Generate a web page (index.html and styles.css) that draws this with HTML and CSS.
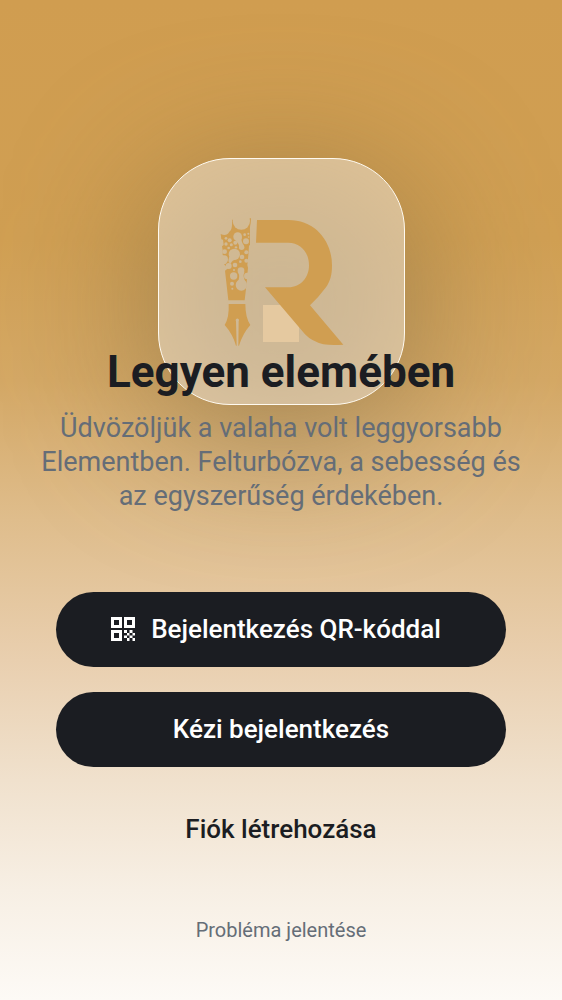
FILE: index.html
```html
<!DOCTYPE html>
<html lang="hu">
<head>
<meta charset="utf-8">
<meta name="viewport" content="width=device-width, initial-scale=1">
<title>Legyen elemében</title>
<link rel="stylesheet" href="styles.css">
</head>
<body>
<main class="welcome">
  <header class="hero">
    <div class="logo">
      <div class="logo-plate">
      <svg class="logo-mark" viewBox="3 6 480 450" aria-hidden="true">
        <defs>
          <mask id="bubbles" maskUnits="userSpaceOnUse" x="40" y="20" width="130" height="280">
            <rect x="40" y="20" width="130" height="280" fill="#fff"/>
            <g fill="#000">
              <circle cx="124" cy="48" r="26"/>
              <circle cx="113" cy="95" r="13"/><path d="M113 100L126 96Q121 108 132 122L118 131Q119 116 107 107Z"/><circle cx="125" cy="127" r="8"/>
              <circle cx="138" cy="109" r="9"/><circle cx="134" cy="89" r="4"/><circle cx="145" cy="86" r="3"/><circle cx="146" cy="96" r="2.500"/>
              <circle cx="89" cy="106" r="6"/><circle cx="78" cy="100" r="4"/><circle cx="106" cy="113" r="6"/><circle cx="94" cy="119" r="4.500"/>
              <circle cx="78" cy="117" r="5"/><circle cx="86" cy="129" r="4"/><circle cx="108" cy="127" r="3.500"/><circle cx="74" cy="140" r="7"/>
              <circle cx="103" cy="148" r="17"/><path d="M88 155Q84 165 86 172L92 176Q96 165 110 163Z"/><circle cx="72" cy="163" r="12"/><circle cx="86" cy="183" r="9"/>
              <circle cx="139" cy="142" r="6"/><circle cx="126" cy="156" r="7"/><circle cx="139" cy="167" r="6"/><circle cx="121" cy="170" r="4"/>
              <circle cx="105" cy="180" r="7"/><circle cx="102" cy="195" r="3"/><circle cx="101" cy="213" r="11"/><circle cx="96" cy="236" r="6"/><circle cx="97" cy="251" r="3"/>
              <circle cx="123" cy="197" r="10"/><path d="M114 201H133Q127 216 138 232L112 234Q122 216 114 201Z"/><circle cx="124" cy="240" r="17"/>
              <circle cx="142" cy="213" r="10"/>
            </g>
          </mask>
        </defs>
        <rect class="mark-tile" x="189" y="300" width="108" height="111"/>
        <path class="mark-gold" d="M171 45H265C345 45 396 107 396 181C396 210 391 228 378 247Q355 278 330 301L430 419Q397 422 370 418Q335 409 315 388L195 247H265C303 247 327 217 327 181C327 143 303 113 265 113H168Z"/>
        <path class="mark-gold" mask="url(#bubbles)" d="M96 44H102L148 40H153L152 55Q149 66 150 78V120L147 122L145 150L142 180L144 188L140 232L138 252L134 286H85L75 197L84 190L72 178L78 176L82 165L74 156L68 150V134L66 124L71 120L69 104L64 103L62 87Q80 95 88 80Q98 75 96 44Z"/>
        <path class="mark-gold" d="M86 297H136Q136 338 151 360Q128 386 117 422H115L116 349A5 5 0 1 0 108 349L110 422H108Q98 387 74 360Q88 338 86 297Z"/>
      </svg>
      </div>
    </div>
    <h1 class="title">Legyen elemében</h1>
    <p class="subtitle">Üdvözöljük a valaha volt leggyorsabb Elementben. Felturbózva, a sebesség és az egyszerűség érdekében.</p>
  </header>
  <div class="actions">
    <button class="button button-solid button-icon" type="button">
      <svg class="qr" viewBox="0 0 24 24" aria-hidden="true"><path fill="currentColor" fill-rule="evenodd" d="M0 0H11V11H0ZM3 3V8H8V3ZM13 0H24V11H13ZM16 3V8H21V3ZM0 13H11V24H0ZM3 16V21H8V16ZM13 13h3v3h-3zM18.500 13h3v3h-3zM16 16h2.500v2.500H16zM21.500 16H24v2.500h-2.500zM13 18.500h3v2.500h-3zM18.500 18.500h3v2.500h-3zM16 21h2.500v3H16zM21.500 21H24v3h-2.500z"/></svg>
      <span>Bejelentkezés QR-kóddal</span>
    </button>
    <button class="button button-solid" type="button">Kézi bejelentkezés</button>
    <button class="button button-text" type="button">Fiók létrehozása</button>
  </div>
  <a class="report" href="#">Probléma jelentése</a>
</main>
</body>
</html>
```

FILE: styles.css
```css
* {
  box-sizing: border-box;
}

body {
  margin: 0;
  font-family: Roboto, "Noto Sans", sans-serif;
  color: #1b1d22;
}

.welcome {
  min-height: 100vh;
  display: flex;
  flex-direction: column;
  align-items: center;
  padding: 158px 32px 56px;
  overflow: hidden;
  background: linear-gradient(#d09d50 0%, #d09f53 24%, #d4a865 38%, #dfbd8c 52%, #e9cfaf 66%, #f0e1cd 78%, #f7efe4 89%, #fdfaf6 100%);
}

.hero {
  display: flex;
  flex-direction: column;
  align-items: center;
  text-align: center;
}

.logo {
  position: relative;
  isolation: isolate;
}

.logo::before {
  content: "";
  position: absolute;
  z-index: -1;
  inset: 24px 0 -24px;
  border-radius: 72px;
  background: rgba(112, 94, 60, 0.55);
  filter: blur(75px);
}

.logo-plate {
  width: 247px;
  height: 247px;
  display: grid;
  place-items: center;
  border: 1px solid #fffaf0;
  border-radius: 72px;
  background: rgba(238, 226, 208, 0.55);
}

.logo-mark {
  width: 160px;
  height: 150px;
}

.mark-gold {
  fill: #d09e51;
}

.mark-tile {
  fill: #e5c9a0;
}

.title {
  position: relative;
  margin: -60px 0 0;
  font-size: 44px;
  line-height: 54px;
  font-weight: 700;
}

.subtitle {
  position: relative;
  margin: 12px 0 0;
  font-size: 27px;
  line-height: 34px;
  color: #656d77;
}

.actions {
  position: relative;
  align-self: stretch;
  display: flex;
  flex-direction: column;
  gap: 25px;
  margin: 79px 24px 0;
}

.button {
  display: flex;
  align-items: center;
  justify-content: center;
  gap: 16px;
  min-height: 75px;
  padding: 0 24px 2px;
  border: 0;
  border-radius: 38px;
  font: 500 26px/32px Roboto, "Noto Sans", sans-serif;
  cursor: pointer;
}

.button-icon {
  padding-right: 34px;
}

.button-solid {
  background: #1b1d22;
  color: #fff;
}

.button-text {
  background: transparent;
  color: #1b1d22;
}

.qr {
  width: 24px;
  height: 24px;
}

.report {
  margin-top: 50px;
  font-size: 20px;
  line-height: 26px;
  color: #656d77;
  text-decoration: none;
}
```
